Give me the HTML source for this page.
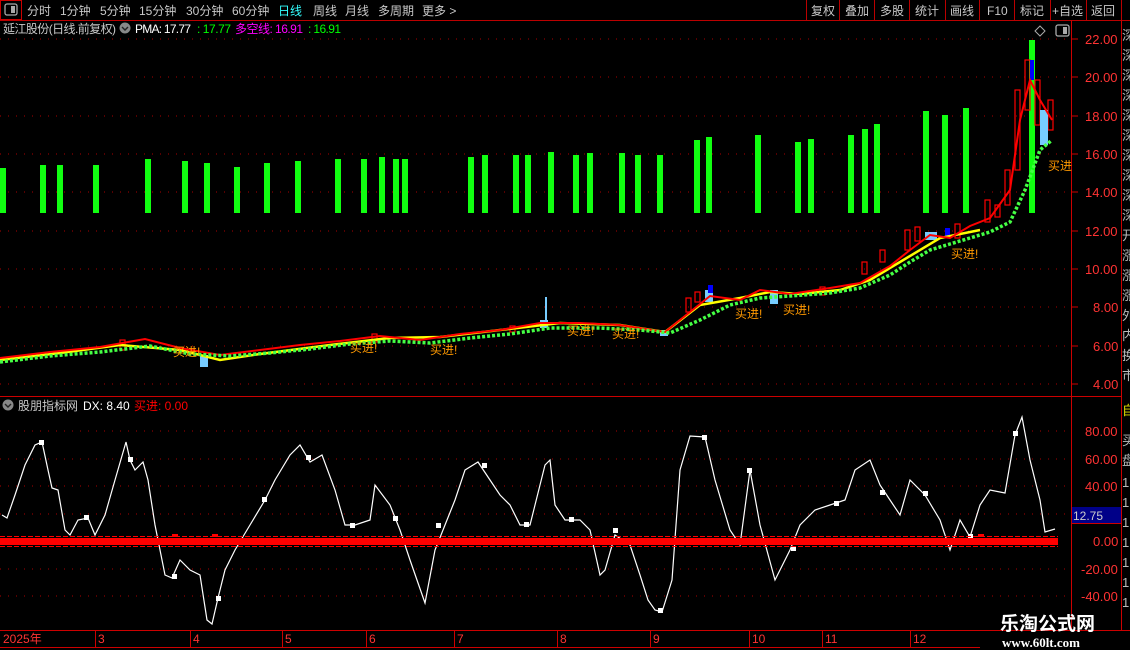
<!DOCTYPE html><html><head><meta charset="utf-8"><style>
body{margin:0;background:#000;width:1130px;height:650px;overflow:hidden;font-family:"Liberation Sans","Noto Sans CJK SC",sans-serif;position:relative}
</style></head><body>
<svg width="1130" height="650" style="position:absolute;left:0;top:0" font-family="Liberation Sans, Noto Sans CJK SC, sans-serif">
<rect x="0.5" y="0.5" width="21" height="19" fill="none" stroke="#c00"/>
<rect x="5" y="4" width="12" height="11" rx="2" fill="none" stroke="#aaa" stroke-width="1.3"/><rect x="11" y="6" width="4" height="7" fill="#aaa"/>
<line x1="0" y1="20.5" x2="1130" y2="20.5" stroke="#b00"/>
<g fill="#c8c8c8" font-size="12">
<text x="27" y="15">分时</text><text x="60" y="15">1分钟</text><text x="100" y="15">5分钟</text><text x="139" y="15">15分钟</text><text x="186" y="15">30分钟</text><text x="232" y="15">60分钟</text>
<text x="278" y="15" fill="#3ff">日线</text><text x="313" y="15">周线</text><text x="345" y="15">月线</text><text x="378" y="15">多周期</text><text x="422" y="15">更多 &gt;</text>
<text x="811" y="15">复权</text><text x="845" y="15">叠加</text><text x="880" y="15">多股</text><text x="915" y="15">统计</text><text x="950" y="15">画线</text><text x="987" y="15">F10</text><text x="1020" y="15">标记</text><text x="1052" y="15">+自选</text><text x="1091" y="15">返回</text>
</g>
<g stroke="#b00"><line x1="806.5" y1="0" x2="806.5" y2="20"/><line x1="839.5" y1="0" x2="839.5" y2="20"/><line x1="874.5" y1="0" x2="874.5" y2="20"/><line x1="909.5" y1="0" x2="909.5" y2="20"/><line x1="945.5" y1="0" x2="945.5" y2="20"/><line x1="979.5" y1="0" x2="979.5" y2="20"/><line x1="1014.5" y1="0" x2="1014.5" y2="20"/><line x1="1050.5" y1="0" x2="1050.5" y2="20"/><line x1="1086.5" y1="0" x2="1086.5" y2="20"/><line x1="1121.5" y1="0" x2="1121.5" y2="20"/></g>
<text x="3" y="33" font-size="12" fill="#c8c8c8" textLength="113">延江股份(日线.前复权)</text>
<circle cx="125" cy="28" r="5.5" fill="#888"/><path d="M122 27l3 3 3-3" stroke="#222" fill="none" stroke-width="1.4"/>
<text x="135" y="33" font-size="12" fill="#fff" textLength="56">PMA: 17.77</text><text x="197" y="33" font-size="12" fill="#0f0" textLength="34">: 17.77</text>
<text x="235" y="33" font-size="12" fill="#f0f" textLength="68">多空线: 16.91</text><text x="308" y="33" font-size="12" fill="#0f0" textLength="33">: 16.91</text>
<path d="M1040 26l5 5-5 5-5-5z" fill="none" stroke="#aaa"/>
<rect x="1056" y="25" width="13" height="11" rx="2" fill="none" stroke="#aaa" stroke-width="1.3"/><rect x="1063" y="27" width="4" height="7" fill="#aaa"/>
<line x1="1071.5" y1="20" x2="1071.5" y2="630" stroke="#c00"/>
<line x1="1121.5" y1="20" x2="1121.5" y2="630" stroke="#c00"/>
<line x1="0" y1="396.5" x2="1121" y2="396.5" stroke="#c00"/>
<line x1="0" y1="630.5" x2="1130" y2="630.5" stroke="#c00"/>
<line x1="0" y1="647.5" x2="980" y2="647.5" stroke="#c00"/>
<g stroke="#a00" stroke-dasharray="1,7"><line x1="0" y1="39" x2="1070" y2="39"/><line x1="0" y1="77" x2="1070" y2="77"/><line x1="0" y1="116" x2="1070" y2="116"/><line x1="0" y1="154" x2="1070" y2="154"/><line x1="0" y1="192" x2="1070" y2="192"/><line x1="0" y1="231" x2="1070" y2="231"/><line x1="0" y1="269" x2="1070" y2="269"/><line x1="0" y1="307" x2="1070" y2="307"/><line x1="0" y1="346" x2="1070" y2="346"/><line x1="0" y1="384" x2="1070" y2="384"/></g>
<g fill="#f33" font-size="13"><text x="1085" y="44">22.00</text><text x="1085" y="82">20.00</text><text x="1085" y="121">18.00</text><text x="1085" y="159">16.00</text><text x="1085" y="197">14.00</text><text x="1085" y="236">12.00</text><text x="1085" y="274">10.00</text><text x="1093" y="312">8.00</text><text x="1093" y="351">6.00</text><text x="1093" y="389">4.00</text></g>
<g stroke="#c00"><line x1="1071" y1="39" x2="1078" y2="39"/><line x1="1071" y1="77" x2="1078" y2="77"/><line x1="1071" y1="116" x2="1078" y2="116"/><line x1="1071" y1="154" x2="1078" y2="154"/><line x1="1071" y1="192" x2="1078" y2="192"/><line x1="1071" y1="231" x2="1078" y2="231"/><line x1="1071" y1="269" x2="1078" y2="269"/><line x1="1071" y1="307" x2="1078" y2="307"/><line x1="1071" y1="346" x2="1078" y2="346"/><line x1="1071" y1="384" x2="1078" y2="384"/></g>
<g fill="#1f1">
<rect x="0" y="168" width="6" height="45"/><rect x="40" y="165" width="6" height="48"/><rect x="57" y="165" width="6" height="48"/><rect x="93" y="165" width="6" height="48"/><rect x="145" y="159" width="6" height="54"/><rect x="182" y="161" width="6" height="52"/><rect x="204" y="163" width="6" height="50"/><rect x="234" y="167" width="6" height="46"/><rect x="264" y="163" width="6" height="50"/><rect x="295" y="161" width="6" height="52"/><rect x="335" y="159" width="6" height="54"/><rect x="361" y="159" width="6" height="54"/><rect x="379" y="157" width="6" height="56"/><rect x="393" y="159" width="6" height="54"/><rect x="402" y="159" width="6" height="54"/><rect x="468" y="157" width="6" height="56"/><rect x="482" y="155" width="6" height="58"/><rect x="513" y="155" width="6" height="58"/><rect x="525" y="155" width="6" height="58"/><rect x="548" y="152" width="6" height="61"/><rect x="573" y="155" width="6" height="58"/><rect x="587" y="153" width="6" height="60"/><rect x="619" y="153" width="6" height="60"/><rect x="635" y="155" width="6" height="58"/><rect x="657" y="155" width="6" height="58"/><rect x="694" y="140" width="6" height="73"/><rect x="706" y="137" width="6" height="76"/><rect x="755" y="135" width="6" height="78"/><rect x="795" y="142" width="6" height="71"/><rect x="808" y="139" width="6" height="74"/><rect x="848" y="135" width="6" height="78"/><rect x="862" y="129" width="6" height="84"/><rect x="874" y="124" width="6" height="89"/><rect x="923" y="111" width="6" height="102"/><rect x="942" y="115" width="6" height="98"/><rect x="963" y="108" width="6" height="105"/><rect x="1029" y="40" width="6" height="173"/>
</g>
<g fill="none" stroke="#f00" stroke-width="1.2">
<rect x="686" y="298" width="5" height="14"/><rect x="695" y="292" width="5" height="10"/><rect x="862" y="262" width="5" height="12"/><rect x="880" y="250" width="5" height="12"/><rect x="905" y="230" width="5" height="20"/><rect x="915" y="227" width="5" height="14"/><rect x="955" y="224" width="5" height="14"/><rect x="985" y="200" width="5" height="22"/><rect x="1005" y="170" width="5" height="35"/><rect x="1015" y="90" width="5" height="80"/><rect x="1025" y="60" width="5" height="50"/><rect x="1035" y="80" width="5" height="45"/><rect x="1048" y="100" width="5" height="30"/>
<rect x="120" y="340" width="5" height="10"/><rect x="372" y="334" width="5" height="8"/><rect x="510" y="326" width="5" height="6"/><rect x="820" y="287" width="5" height="8"/><rect x="995" y="205" width="5" height="12"/>
</g>
<g fill="#7cf"><rect x="705" y="290" width="8" height="12"/><rect x="770" y="290" width="8" height="14"/><rect x="925" y="232" width="12" height="8"/><rect x="1040" y="110" width="8" height="35"/><rect x="200" y="355" width="8" height="12"/><rect x="540" y="320" width="8" height="8"/><rect x="660" y="330" width="8" height="6"/><rect x="545" y="297" width="2" height="25"/></g>
<g fill="#00f"><rect x="708" y="285" width="5" height="8"/><rect x="1030" y="60" width="4" height="20"/><rect x="945" y="228" width="5" height="8"/></g>
<polyline fill="none" stroke="#ff0" stroke-width="2.5" points="0,360 60,353 120,345 180,350 220,360 260,354 330,345 390,338 440,337 500,330 560,323 620,325 665,332 700,305 740,298 770,292 800,294 840,290 870,280 900,262 940,238 980,230"/>
<polyline fill="none" stroke="#f00" stroke-width="2" points="0,358 50,352 100,347 145,339 180,348 220,355 260,350 300,345 340,341 380,336 420,340 460,334 500,330 540,323 580,323 620,325 665,332 690,312 710,296 740,300 760,290 790,294 830,288 860,283 890,266 910,250 930,235 950,238 970,226 990,218 1010,190 1020,120 1030,80 1040,100 1052,120"/>
<polyline fill="none" stroke="#4f4" stroke-width="3.5" stroke-dasharray="3,2" points="0,362 50,356 100,352 150,346 190,354 230,356 270,353 310,349 350,344 390,341 430,343 470,338 510,334 550,328 600,328 640,330 670,333 700,320 730,305 760,298 790,296 830,293 860,288 890,275 910,262 930,250 950,244 970,238 990,232 1010,222 1025,190 1040,150 1052,140"/>
<g fill="#f90" font-size="12"><text x="173" y="356">买进!</text><text x="350" y="352">买进!</text><text x="430" y="354">买进!</text><text x="567" y="335">买进!</text><text x="612" y="338">买进!</text><text x="735" y="318">买进!</text><text x="783" y="314">买进!</text><text x="951" y="258">买进!</text><text x="1048" y="170">买进</text></g>
<circle cx="8" cy="405" r="5.5" fill="#888"/><path d="M5 404l3 3 3-3" stroke="#222" fill="none" stroke-width="1.4"/>
<text x="18" y="410" font-size="12" fill="#c8c8c8">股朋指标网</text><text x="83" y="410" font-size="12" fill="#fff">DX: 8.40</text><text x="134" y="410" font-size="12" fill="#f00">买进: 0.00</text>
<g stroke="#a00" stroke-dasharray="1,7"><line x1="0" y1="431" x2="1070" y2="431"/><line x1="0" y1="459" x2="1070" y2="459"/><line x1="0" y1="486" x2="1070" y2="486"/><line x1="0" y1="514" x2="1070" y2="514"/><line x1="0" y1="569" x2="1070" y2="569"/><line x1="0" y1="596" x2="1070" y2="596"/></g>
<g fill="#f33" font-size="13"><text x="1085" y="436">80.00</text><text x="1085" y="464">60.00</text><text x="1085" y="491">40.00</text><text x="1093" y="546">0.00</text><text x="1081" y="574">-20.00</text><text x="1081" y="601">-40.00</text></g>
<rect x="1072" y="507" width="49" height="16" fill="#008"/><line x1="1072" y1="523.5" x2="1121" y2="523.5" stroke="#c00"/><text x="1073" y="520" font-size="12" fill="#ccc">12.75</text>
<polyline fill="none" stroke="#fff" stroke-width="1.2" points="2,515 7,518 15,495 25,465 35,445 42,442 48,470 52,488 58,490 65,530 70,535 78,520 88,518 95,535 105,515 115,480 126,442 130,460 135,470 143,462 148,480 155,525 165,575 172,578 180,560 190,570 200,575 207,620 212,624 218,598 225,570 235,550 250,525 265,500 275,480 290,455 300,445 310,462 322,455 335,490 345,525 355,525 370,520 375,485 390,505 400,530 410,560 425,603 435,550 445,525 455,500 465,470 478,462 490,480 500,495 510,505 520,525 530,525 545,465 550,460 555,505 565,520 580,520 590,530 600,575 605,570 615,535 630,545 640,575 648,600 655,610 662,612 672,580 680,470 690,436 705,437 715,480 730,530 740,545 750,470 760,525 775,580 790,550 800,525 815,510 830,505 845,500 855,470 870,460 880,485 890,500 900,515 910,480 925,495 940,520 950,550 960,520 970,537 980,505 990,490 1005,493 1015,435 1022,417 1030,460 1040,500 1045,532 1055,529"/>
<g fill="#fff"><rect x="39" y="440" width="5" height="5"/><rect x="128" y="457" width="5" height="5"/><rect x="84" y="515" width="5" height="5"/><rect x="172" y="574" width="5" height="5"/><rect x="216" y="596" width="5" height="5"/><rect x="262" y="497" width="5" height="5"/><rect x="306" y="455" width="5" height="5"/><rect x="350" y="523" width="5" height="5"/><rect x="393" y="516" width="5" height="5"/><rect x="436" y="523" width="5" height="5"/><rect x="482" y="463" width="5" height="5"/><rect x="524" y="522" width="5" height="5"/><rect x="569" y="517" width="5" height="5"/><rect x="613" y="528" width="5" height="5"/><rect x="658" y="608" width="5" height="5"/><rect x="702" y="435" width="5" height="5"/><rect x="747" y="468" width="5" height="5"/><rect x="791" y="546" width="5" height="5"/><rect x="834" y="501" width="5" height="5"/><rect x="880" y="490" width="5" height="5"/><rect x="923" y="491" width="5" height="5"/><rect x="968" y="534" width="5" height="5"/><rect x="1013" y="431" width="5" height="5"/></g>
<rect x="0" y="538" width="1058" height="7" fill="#f00"/>
<line x1="0" y1="536.5" x2="1058" y2="536.5" stroke="#f00" stroke-dasharray="5,2"/>
<line x1="0" y1="546.5" x2="1058" y2="546.5" stroke="#f00" stroke-dasharray="5,2"/>
<g fill="#f00"><rect x="172" y="534" width="6" height="3"/><rect x="212" y="534" width="6" height="3"/><rect x="978" y="534" width="6" height="3"/></g>
<g fill="#f33" font-size="12"><text x="3" y="643">2025年</text><text x="98" y="643">3</text><text x="193" y="643">4</text><text x="285" y="643">5</text><text x="369" y="643">6</text><text x="457" y="643">7</text><text x="560" y="643">8</text><text x="653" y="643">9</text><text x="752" y="643">10</text><text x="825" y="643">11</text><text x="913" y="643">12</text></g>
<g stroke="#c00"><line x1="95.5" y1="630" x2="95.5" y2="647"/><line x1="190.5" y1="630" x2="190.5" y2="647"/><line x1="282.5" y1="630" x2="282.5" y2="647"/><line x1="366.5" y1="630" x2="366.5" y2="647"/><line x1="454.5" y1="630" x2="454.5" y2="647"/><line x1="557.5" y1="630" x2="557.5" y2="647"/><line x1="650.5" y1="630" x2="650.5" y2="647"/><line x1="749.5" y1="630" x2="749.5" y2="647"/><line x1="822.5" y1="630" x2="822.5" y2="647"/><line x1="910.5" y1="630" x2="910.5" y2="647"/></g>
<g fill="#bbb" font-size="13"><text x="1122" y="40">深</text><text x="1122" y="60">深</text><text x="1122" y="80">深</text><text x="1122" y="100">深</text><text x="1122" y="120">深</text><text x="1122" y="140">深</text><text x="1122" y="160">深</text><text x="1122" y="180">深</text><text x="1122" y="200">深</text><text x="1122" y="220">深</text><text x="1122" y="240">开</text><text x="1122" y="260">涨</text><text x="1122" y="280">涨</text><text x="1122" y="300">涨</text><text x="1122" y="320">外</text><text x="1122" y="340">内</text><text x="1122" y="360">换</text><text x="1122" y="380">市</text>
<text x="1122" y="445">买</text><text x="1122" y="465">盘</text><text x="1122" y="487">1</text><text x="1122" y="507">1</text><text x="1122" y="527">1</text><text x="1122" y="547">1</text><text x="1122" y="567">1</text><text x="1122" y="587">1</text><text x="1122" y="607">1</text></g>
<text x="1122" y="415" font-size="13" fill="#dd0">自</text>
<rect x="980" y="631" width="150" height="19" fill="#000"/>
<text x="1000" y="630" font-size="19" font-weight="bold" fill="#fff" font-family="Noto Sans CJK SC, sans-serif">乐淘公式网</text>
<text x="1002" y="647" font-size="13" font-weight="bold" fill="#fff" font-family="Liberation Serif, serif">www.60lt.com</text>
</svg>
</body></html>
